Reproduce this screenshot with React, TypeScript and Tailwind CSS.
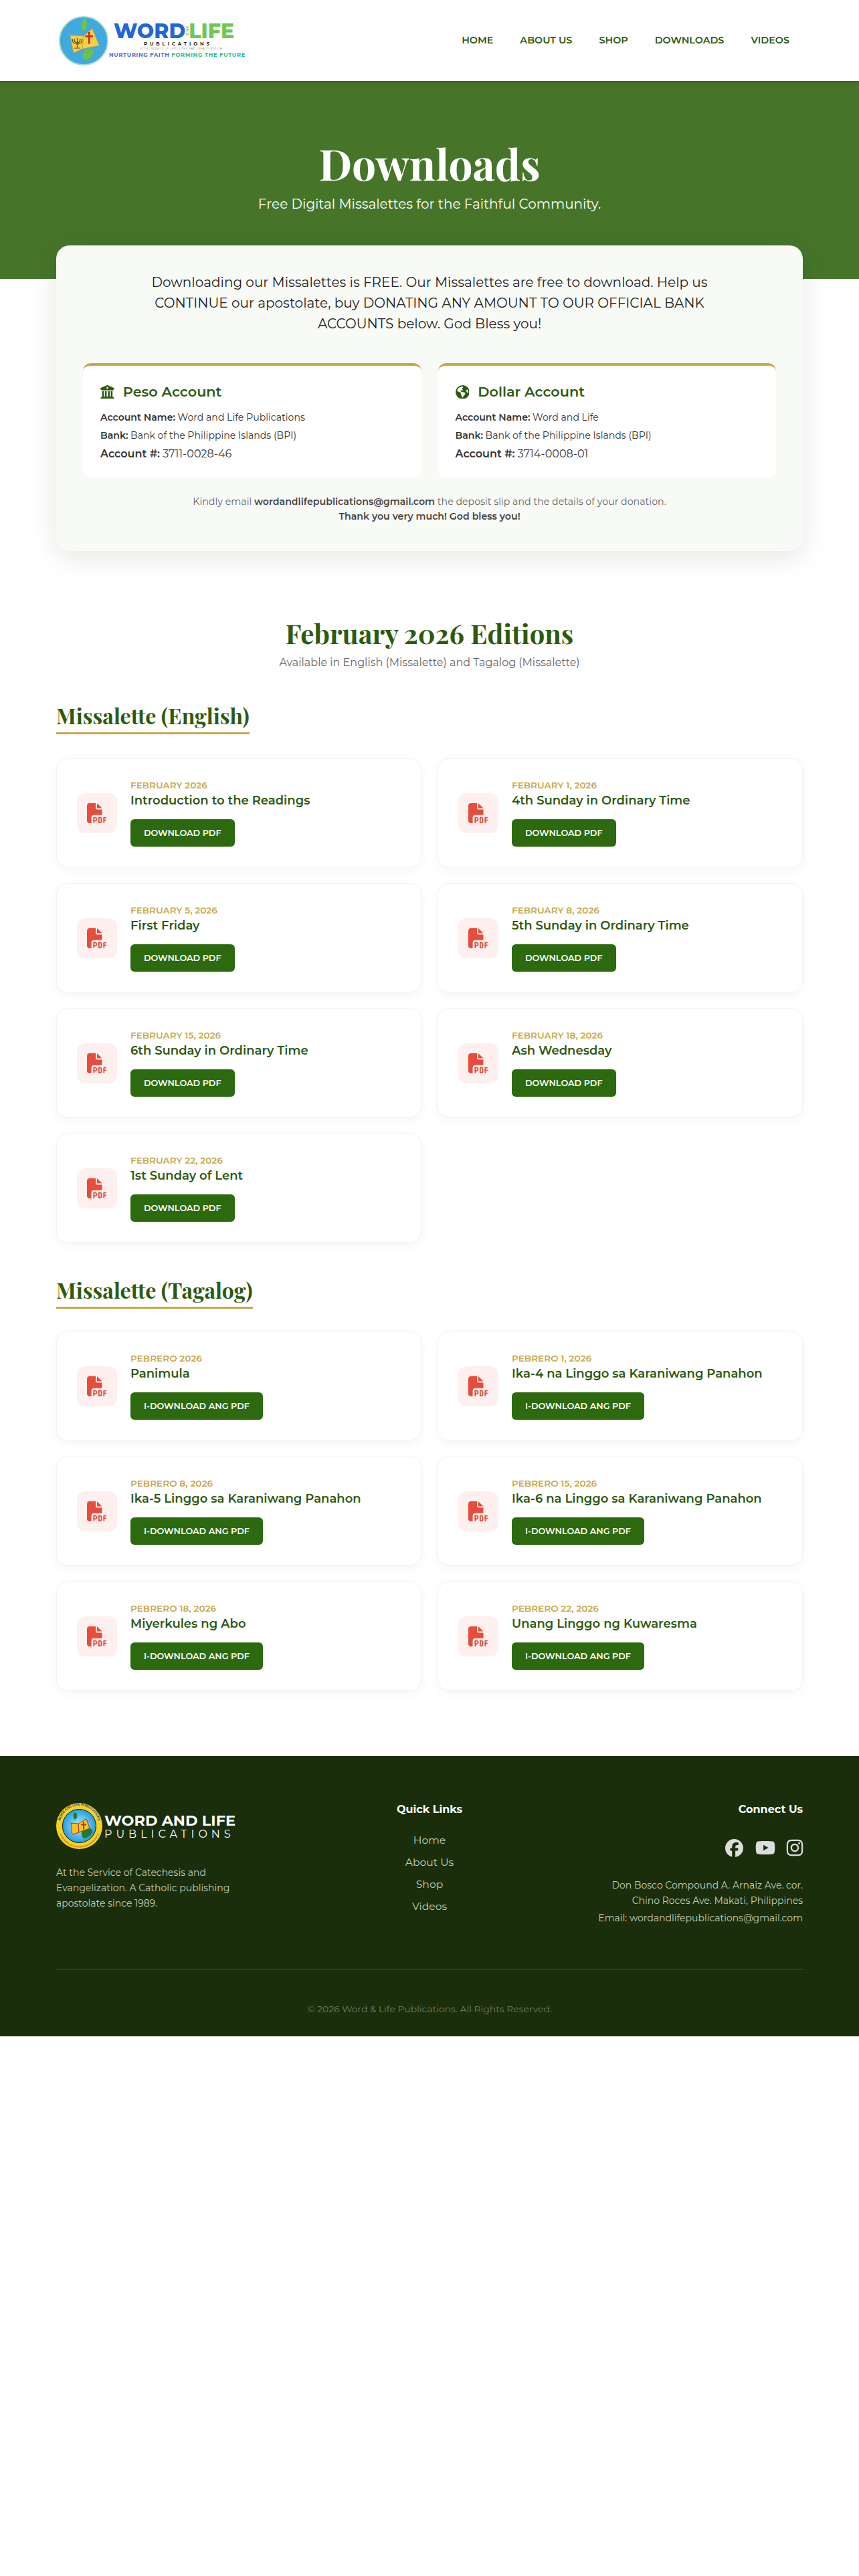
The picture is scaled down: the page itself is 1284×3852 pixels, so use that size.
import { FaBuildingColumns, FaEarthAmericas, FaFacebook, FaFilePdf, FaInstagram, FaYoutube } from "react-icons/fa6";

const sans = "font-['Montserrat','Inter',sans-serif]";
const serif = "font-['Playfair_Display','Liberation_Serif',serif]";

const navLinks = ["Home", "About Us", "Shop", "Downloads", "Videos"];

const english = [
  { date: "February 2026", title: "Introduction to the Readings" },
  { date: "February 1, 2026", title: "4th Sunday in Ordinary Time" },
  { date: "February 5, 2026", title: "First Friday" },
  { date: "February 8, 2026", title: "5th Sunday in Ordinary Time" },
  { date: "February 15, 2026", title: "6th Sunday in Ordinary Time" },
  { date: "February 18, 2026", title: "Ash Wednesday" },
  { date: "February 22, 2026", title: "1st Sunday of Lent" },
];

const tagalog = [
  { date: "Pebrero 2026", title: "Panimula" },
  { date: "Pebrero 1, 2026", title: "Ika-4 na Linggo sa Karaniwang Panahon" },
  { date: "Pebrero 8, 2026", title: "Ika-5 Linggo sa Karaniwang Panahon" },
  { date: "Pebrero 15, 2026", title: "Ika-6 na Linggo sa Karaniwang Panahon" },
  { date: "Pebrero 18, 2026", title: "Miyerkules ng Abo" },
  { date: "Pebrero 22, 2026", title: "Unang Linggo ng Kuwaresma" },
];

function HeaderLogo() {
  return (
    <div className="flex items-center h-[74px] w-[282px] ml-[4px]">
      <svg width="74" height="74" viewBox="0 0 74 74" className="shrink-0">
        <circle cx="37" cy="37" r="36" fill="#3fa9e0" stroke="#a8dcc0" strokeWidth="2" />
        <path d="M38 4c5 1 5 8 3 13s-6 8-7 3 0-14 4-16zM38 52c6-3 13-3 14 1s-6 11-11 13-8-10-3-14z" fill="#6cc24a" />
        <path d="M17 29l20 1-2 19-13 6z" fill="#f5cf4a" stroke="#d8a92e" />
        <path d="M37 30l13-11 10 25-25 5z" fill="#f5cf4a" stroke="#d8a92e" />
        <path d="M44 24h2.5v5h4.5v2.5h-4.5v10H44v-10h-4.500V29H44z" fill="#c8281e" />
        <path d="M20 34c0 6 3 8 7.500 8s7.500-2 7.500-8M23 34c0 4 2 6 4.500 6s4.500-2 4.500-6M27.500 33v14M23 48h9" fill="none" stroke="#5b4a1f" strokeWidth="1.2" />
      </svg>
      <div className="flex flex-col items-start ml-[1px]">
        <div className="flex items-center h-[26px]">
          <span className="text-[30px] leading-none font-extrabold text-[#2266d8] ml-[7px]">WORD</span>
          <span className="[writing-mode:vertical-rl] text-[5px] leading-none tracking-[1px] text-[#555] mx-[6px]">AND</span>
          <span className="text-[30px] leading-none font-extrabold text-[#6cc950]">LIFE</span>
        </div>
        <span className="text-[7px] leading-[9px] font-bold tracking-[3.9px] text-[#222] ml-[52px] mt-[1px]">PUBLICATIONS</span>
        <span className="text-[3.5px] leading-[6px] tracking-[0.5px] text-[#555] ml-[46px]">AT THE SERVICE OF CATECHESIS AND EVANGELIZATION</span>
        <span className="text-[8.2px] leading-[11px] font-bold tracking-[0.7px] whitespace-nowrap text-[#4a6fc9] mt-[1px]">
          NURTURING FAITH <span className="text-[#3cb878]">FORMING THE FUTURE</span>
        </span>
      </div>
    </div>
  );
}

function FooterLogo() {
  return (
    <div className="flex items-center gap-[3px]">
      <svg width="69" height="69" viewBox="0 0 69 69" className="shrink-0">
        <defs>
          <path id="ring-top" d="M5.500 33A29 29 0 0 1 63.500 33" />
          <path id="ring-bottom" d="M4 41A31 31 0 0 0 65 41" />
          <radialGradient id="sea">
            <stop offset="0%" stopColor="#bfe8fa" />
            <stop offset="100%" stopColor="#1d9fe6" />
          </radialGradient>
        </defs>
        <circle cx="34.500" cy="34.500" r="34.500" fill="#f5d21f" />
        <text className="font-['Liberation_Sans',sans-serif]" fontSize="5" fontWeight="700" fill="#1d3c8c" textAnchor="middle">
          <textPath href="#ring-top" startOffset="50%">WORD AND LIFE PUBLICATIONS</textPath>
        </text>
        <text className="font-['Liberation_Sans',sans-serif]" fontSize="2.700" fontWeight="700" fill="#b5301c" textAnchor="middle">
          <textPath href="#ring-bottom" startOffset="50%">AT THE SERVICE OF CATECHESIS AND EVANGELIZATION</textPath>
        </text>
        <circle cx="34.500" cy="34.500" r="25" fill="url(#sea)" stroke="#111" />
        <path d="M26 15c4-2 6 2 5 6s-4 5-5 2 0-6 0-8zM40 40c6-3 12-3 14 1s-6 11-11 12-7-10-3-13z" fill="#1f7a33" />
        <path d="M22 30l11 1 1 13-10 3z" fill="#f2c61f" stroke="#b5301c" />
        <path d="M33 31l12-7 5 14-16 6z" fill="#f2c61f" stroke="#b5301c" />
        <path d="M40 28h2v3.500h3v2h-3v6h-2v-6h-3v-2h3z" fill="#c8281e" />
      </svg>
      <div className="flex flex-col text-white">
        <span className="text-[22.4px] leading-[24px] font-bold whitespace-nowrap">WORD AND LIFE</span>
        <span className="text-[16px] leading-[18px] tracking-[6px] whitespace-nowrap font-normal">PUBLICATIONS</span>
      </div>
    </div>
  );
}

function BankCard({ icon, title, name, number }: { icon: React.ReactNode; title: string; name: string; number: string }) {
  return (
    <div className="h-[172px] bg-white rounded-xl border-t-4 border-[#c9a84c] pl-[26px] pr-[25px] pt-[24px]">
      <h3 className="flex items-center gap-[13px] text-[20.8px] leading-[30px] font-semibold text-[#2d5a0f]">
        {icon}
        {title}
      </h3>
      <p className="mt-[10px] text-[14.1px] leading-[27px] text-[#333]">
        <strong className="font-semibold">Account Name:</strong> {name}
      </p>
      <p className="text-[14.1px] leading-[27px] text-[#333]">
        <strong className="font-semibold">Bank:</strong> Bank of the Philippine Islands (BPI)
      </p>
      <p className="text-[16px] leading-[27px] text-[#333]">
        <strong className="font-semibold">Account #:</strong> {number}
      </p>
    </div>
  );
}

function DownloadCard({ date, title, label }: { date: string; title: string; label: string }) {
  return (
    <div className="h-[163px] bg-white rounded-2xl border border-[#f3f3f3] shadow-[0_5px_15px_rgba(0,0,0,0.04)] flex items-center px-[30px] gap-[20px]">
      <div className="w-[60px] h-[60px] rounded-xl bg-[#fdf0ef] flex items-center justify-center shrink-0">
        <FaFilePdf className="text-[#e74c3c] text-[30px]" />
      </div>
      <div>
        <div className="text-[13.6px] leading-[16px] font-semibold uppercase text-[#c9a84c]">{date}</div>
        <div className="text-[18px] leading-[26px] font-semibold text-[#2d5a0f] mt-[2px]">{title}</div>
        <a className="block w-fit mt-[15px] h-[41px] leading-[41px] px-[20px] rounded-md bg-[#2d6a0f] text-white text-[12.8px] font-semibold uppercase">
          {label}
        </a>
      </div>
    </div>
  );
}

function SectionTitle({ children }: { children: React.ReactNode }) {
  return (
    <h3 className={`${serif} inline-block text-[32px] leading-[43px] font-bold text-[#2d5a0f] border-b-[3px] border-[#c9a84c] pb-[4px]`}>
      {children}
    </h3>
  );
}

export default function App() {
  return (
    <div className={`${sans} bg-white`}>
      {/* header */}
      <header className="relative z-10 h-[121px] bg-white px-[84px] flex items-center justify-between shadow-[0_2px_5px_rgba(0,0,0,0.2)]">
        <HeaderLogo />
        <nav className="flex gap-[40px] pr-[20px]">
          {navLinks.map((link) => (
            <a key={link} className="text-[14.4px] font-semibold uppercase text-[#2d5a0f]">
              {link}
            </a>
          ))}
        </nav>
      </header>

      {/* hero */}
      <section className="h-[296px] bg-[#46752a] text-center text-white pt-[80px]">
        <h1 className={`${serif} text-[64px] leading-[86px] font-bold`}>Downloads</h1>
        <p className="mt-[3px] text-[20px] leading-[30px] font-normal">Free Digital Missalettes for the Faithful Community.</p>
      </section>

      {/* donation */}
      <section className="px-[84px] -mt-[50px]">
        <div className="h-[457px] rounded-[20px] bg-[#f8faf6] shadow-[0_10px_40px_rgba(0,0,0,0.1)] px-[40px] pt-[40px] relative">
          <p className="text-center text-[20px] leading-[31px] text-[#222] max-w-[860px] mx-auto">
            Downloading our Missalettes is FREE. Our Missalettes are free to download. Help us CONTINUE our apostolate, buy DONATING ANY AMOUNT TO OUR OFFICIAL BANK ACCOUNTS below. God Bless you!
          </p>
          <div className="grid grid-cols-2 gap-[25px] mt-[43px]">
            <BankCard icon={<FaBuildingColumns className="text-[#2d5a0f]" />} title="Peso Account" name="Word and Life Publications" number="3711-0028-46" />
            <BankCard icon={<FaEarthAmericas className="text-[#2d5a0f]" />} title="Dollar Account" name="Word and Life" number="3714-0008-01" />
          </div>
          <p className="text-center text-[14.2px] leading-[22px] text-[#666] mt-[24px]">
            Kindly email <strong className="font-semibold text-[#444]">wordandlifepublications@gmail.com</strong> the deposit slip and the details of your donation.
            <br />
            <strong className="font-semibold text-[#444]">Thank you very much! God bless you!</strong>
          </p>
        </div>
      </section>

      {/* editions */}
      <main className="px-[84px] pt-[97px]">
        <div className="text-center">
          <h2 className={`${serif} text-[40px] leading-[52px] font-bold text-[#2d5a0f]`}>February 2026 Editions</h2>
          <p className="mt-[6px] text-[16px] leading-[24px] text-[#666]">Available in English (Missalette) and Tagalog (Missalette)</p>
        </div>

        <div className="mt-[45px]">
          <SectionTitle>Missalette (English)</SectionTitle>
          <div className="grid grid-cols-2 gap-[24px] mt-[36px]">
            {english.map((item) => (
              <DownloadCard key={item.date} date={item.date} title={item.title} label="Download PDF" />
            ))}
          </div>
        </div>

        <div className="mt-[49px]">
          <SectionTitle>Missalette (Tagalog)</SectionTitle>
          <div className="grid grid-cols-2 gap-[24px] mt-[34px]">
            {tagalog.map((item) => (
              <DownloadCard key={item.date} date={item.date} title={item.title} label="I-Download ang PDF" />
            ))}
          </div>
        </div>
      </main>

      {/* footer */}
      <footer className="mt-[98px] h-[419px] bg-[#1a2e0c] px-[84px] pt-[70px]">
        <div className="grid grid-cols-3 h-[249px] border-b border-[#4a5c3a]">
          <div>
            <FooterLogo />
            <p className="mt-[24px] text-[14px] leading-[23px] text-[#c5cfb5] max-w-[280px]">
              At the Service of Catechesis and Evangelization. A Catholic publishing apostolate since 1989.
            </p>
          </div>
          <div className="text-center">
            <h4 className="text-[16px] leading-[20px] font-bold text-white">Quick Links</h4>
            <ul className="mt-[24px] text-[15.6px] text-[#c5cfb5] flex flex-col gap-[9px]">
              <li className="leading-[24px]">Home</li>
              <li className="leading-[24px]">About Us</li>
              <li className="leading-[24px]">Shop</li>
              <li className="leading-[24px]">Videos</li>
            </ul>
          </div>
          <div className="text-right">
            <h4 className="text-[16px] leading-[20px] font-bold text-white">Connect Us</h4>
            <div className="mt-[32px] flex justify-end items-center gap-[18px] text-[#dddddd]">
              <FaFacebook className="w-[27px] h-[27px]" />
              <FaYoutube className="w-[30px] h-[30px]" />
              <FaInstagram className="w-[28px] h-[28px] -ml-[3px] -mr-[2px]" />
            </div>
            <p className="mt-[30px] text-[14px] leading-[23px] text-[#c5cfb5]">
              Don Bosco Compound A. Arnaiz Ave. cor.
              <br />
              Chino Roces Ave. Makati, Philippines
            </p>
            <p className="mt-[3px] text-[14px] leading-[23px] text-[#c5cfb5]">Email: wordandlifepublications@gmail.com</p>
          </div>
        </div>
        <p className="mt-[49px] text-center text-[13.9px] text-[#6f7d5f]">© 2026 Word &amp; Life Publications. All Rights Reserved.</p>
      </footer>
    </div>
  );
}
